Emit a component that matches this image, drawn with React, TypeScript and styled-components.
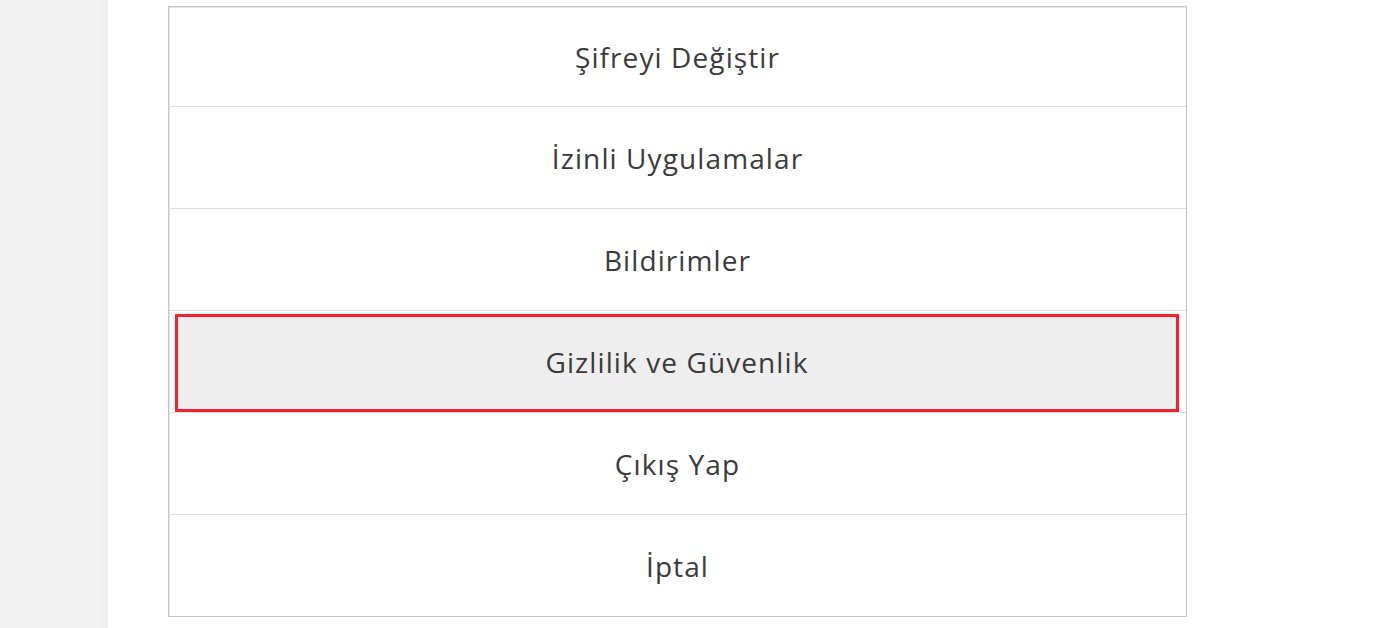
import React from 'react';
import styled, { createGlobalStyle } from 'styled-components';

const GlobalStyle = createGlobalStyle`
  html, body {
    margin: 0;
    padding: 0;
    background: #ffffff;
  }
  body {
    font-family: 'Open Sans', 'Noto Sans', 'Liberation Sans', sans-serif;
  }
`;

const menuItems = [
  'Şifreyi Değiştir',
  'İzinli Uygulamalar',
  'Bildirimler',
  'Gizlilik ve Güvenlik',
  'Çıkış Yap',
  'İptal'
];

const App = () => {
  const selectedIndex = 3;

  return (
    <>
      <GlobalStyle />
      <S.Page>
        <S.Sidebar />
        <S.Main>
          <S.Menu>
            {menuItems.map((label, index) => (
              <S.Row key={label}>
                <S.Item $selected={index === selectedIndex}>{label}</S.Item>
              </S.Row>
            ))}
          </S.Menu>
        </S.Main>
      </S.Page>
    </>
  );
};

export default App;

const S = {
  Page: styled.div`
    display: flex;
    width: 1380px;
    height: 628px;
    overflow: hidden;
  `,
  Sidebar: styled.div`
    width: 108px;
    flex-shrink: 0;
    background: linear-gradient(to right, #f2f2f2 0%, #f2f2f2 92%, #ececec 100%);
  `,
  Main: styled.div`
    flex: 1;
    padding: 6px 0 0 60px;
  `,
  Menu: styled.div`
    width: 1017px;
    display: flex;
    flex-direction: column;
    border: 1px solid #c4c4c4;
    box-shadow: inset 1px 1px 0 #e4e4e4;
    background: #ffffff;
  `,
  Row: styled.div`
    display: flex;
    height: 101px;
    border-top: 1px solid #dedede;

    &:first-child {
      height: 99px;
      border-top: none;
    }
  `,
  Item: styled.div<{ $selected: boolean }>`
    flex: 1;
    display: flex;
    align-items: center;
    justify-content: center;
    color: #3a3a3a;
    font-size: 28px;
    letter-spacing: 1.1px;

    ${({ $selected }) =>
      $selected &&
      `
      margin: 3px 7px 0 6px;
      padding-bottom: 2px;
      border: 3px solid #f8202e;
      background: #eeeeee;
    `}
  `
};
